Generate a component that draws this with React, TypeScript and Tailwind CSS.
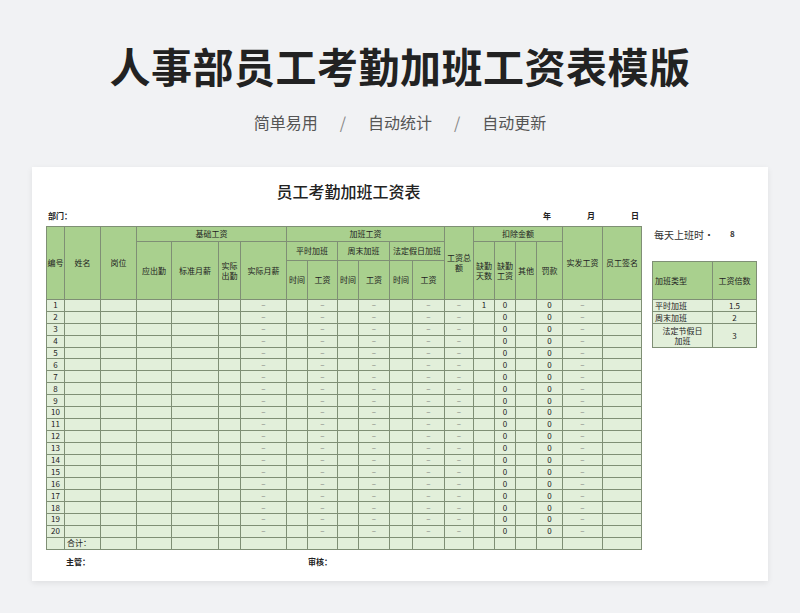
import React from "react";

const widths = [18,36,36,35,47,22,46,21,30,21,31,23,32,29,21,21,21,26,40,39];
const H = "bg-[#a9d08e] border border-[#7f8f75] text-center align-middle leading-[10px]";
const D = "border border-[#7f8f75] text-center h-[11.9px] p-0 leading-[10px]";

export default function App() {
  const rows = Array.from({ length: 20 }, (_, i) => i + 1);
  return (
    <div className="w-[800px] h-[613px] bg-[#f1f2f4] overflow-hidden" style={{ fontFamily: '"Noto Sans CJK SC", "Noto Sans", sans-serif' }}>
      <div className="h-[104px] flex items-end justify-center pb-[18px]">
        <h1 className="text-[41px] font-bold text-[#222] tracking-[0.5px] leading-none">人事部员工考勤加班工资表模版</h1>
      </div>
      <div className="flex justify-center gap-[22px] text-[16px] text-[#555] mt-[6px]">
        <span>简单易用</span><span className="text-[#888]">/</span><span>自动统计</span><span className="text-[#888]">/</span><span>自动更新</span>
      </div>
      <div className="mx-[32px] mt-[33px] h-[414px] bg-white shadow-[0_2px_6px_rgba(0,0,0,0.08)] pl-[14px] pt-[12px] text-[#222]">
        <div className="w-[595px] text-center text-[16px] font-medium leading-[24px] pl-[10px]">员工考勤加班工资表</div>
        <div className="flex text-[8px] font-bold mt-[6px] h-[14px] items-center w-[595px]">
          <span className="ml-[2px]">部门：</span>
          <span className="ml-auto mr-[36px]">年</span>
          <span className="mr-[36px]">月</span>
          <span className="mr-[2px]">日</span>
        </div>
        <div className="flex mt-[3px]">
          <table className="border-collapse text-[8px] table-fixed" style={{ width: 595 }}>
            <colgroup>{widths.map((w, i) => <col key={i} style={{ width: w }} />)}</colgroup>
            <tbody>
              <tr className="h-[15px]">
                <td rowSpan={3} className={H}>编号</td>
                <td rowSpan={3} className={H}>姓名</td>
                <td rowSpan={3} className={H}>岗位</td>
                <td colSpan={4} className={H}>基础工资</td>
                <td colSpan={6} className={H}>加班工资</td>
                <td rowSpan={3} className={H}>工资总<br />额</td>
                <td colSpan={4} className={H}>扣除金额</td>
                <td rowSpan={3} className={H}>实发工资</td>
                <td rowSpan={3} className={H}>员工签名</td>
              </tr>
              <tr className="h-[19px]">
                <td rowSpan={2} className={H}>应出勤</td>
                <td rowSpan={2} className={H}>标准月薪</td>
                <td rowSpan={2} className={H}>实际<br />出勤</td>
                <td rowSpan={2} className={H}>实际月薪</td>
                <td colSpan={2} className={H}>平时加班</td>
                <td colSpan={2} className={H}>周末加班</td>
                <td colSpan={2} className={H + " whitespace-nowrap"}>法定假日加班</td>
                <td rowSpan={2} className={H}>缺勤<br />天数</td>
                <td rowSpan={2} className={H}>缺勤<br />工资</td>
                <td rowSpan={2} className={H}>其他</td>
                <td rowSpan={2} className={H}>罚款</td>
              </tr>
              <tr className="h-[39px]">
                {["时间","工资","时间","工资","时间","工资"].map((t, i) => <td key={i} className={H}>{t}</td>)}
              </tr>
              {rows.map((r) => (
                <tr key={r} className="bg-[#e2efda] h-[11.9px]">
                  <td className={D}>{r}</td>
                  <td className={D}></td><td className={D}></td><td className={D}></td><td className={D}></td><td className={D}></td>
                  <td className={D + " text-[#777]"}>–</td>
                  <td className={D}></td><td className={D + " text-[#777]"}>–</td>
                  <td className={D}></td><td className={D + " text-[#777]"}>–</td>
                  <td className={D}></td><td className={D + " text-[#777]"}>–</td>
                  <td className={D + " text-[#777]"}>–</td>
                  <td className={D}>{r === 1 ? "1" : ""}</td>
                  <td className={D}>0</td>
                  <td className={D}></td>
                  <td className={D}>0</td>
                  <td className={D + " text-[#777]"}>–</td>
                  <td className={D}></td>
                </tr>
              ))}
              <tr className="bg-[#e2efda] h-[11.9px]">
                <td className={D}></td>
                <td className={D + " text-left pl-[2px]"}>合计：</td>
                {Array.from({ length: 18 }, (_, i) => <td key={i} className={D}></td>)}
              </tr>
            </tbody>
          </table>
          <div className="ml-[10px] w-[104px]">
            <div className="flex text-[10px] h-[16px] items-center text-[#333]">
              <span className="ml-[2px]">每天上班时·</span>
              <span className="ml-[16px] font-bold text-[8px]">8</span>
            </div>
            <table className="border-collapse text-[8px] table-fixed mt-[19px]" style={{ width: 104 }}>
              <colgroup><col style={{ width: 60 }} /><col style={{ width: 44 }} /></colgroup>
              <tbody>
                <tr className="h-[38px]">
                  <td className={H + " text-left pl-[2px]"}>加班类型</td>
                  <td className={H}>工资倍数</td>
                </tr>
                <tr className="bg-[#e2efda] h-[12px]"><td className={D + " text-left pl-[2px]"}>平时加班</td><td className={D}>1.5</td></tr>
                <tr className="bg-[#e2efda] h-[12px]"><td className={D + " text-left pl-[2px]"}>周末加班</td><td className={D}>2</td></tr>
                <tr className="bg-[#e2efda] h-[24px]"><td className={D + " !h-[24px]"}>法定节假日<br />加班</td><td className={D + " !h-[24px]"}>3</td></tr>
              </tbody>
            </table>
          </div>
        </div>
        <div className="flex text-[8px] font-bold mt-[6px]">
          <span className="ml-[20px]">主管：</span>
          <span className="ml-[218px]">审核：</span>
        </div>
      </div>
    </div>
  );
}
